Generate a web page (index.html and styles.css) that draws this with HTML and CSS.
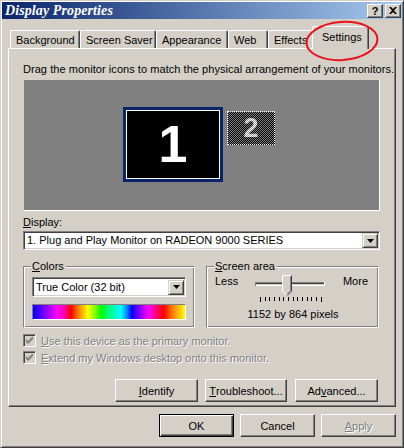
FILE: index.html
```html
<!DOCTYPE html>
<html>
<head>
<meta charset="utf-8">
<link rel="stylesheet" href="styles.css">
</head>
<body>
<div class="window">
  <div class="titlebar">
    <span class="title">Display Properties</span>
    <div class="tb-buttons">
      <span class="tb-btn tb-help">?</span>
      <span class="tb-btn"><svg width="8" height="7" viewBox="0 0 8 7"><path d="M0 0h2l2 2 2-2h2L5 3.5 8 7H6L4 5 2 7H0l3-3.5z" fill="#000"/></svg></span>
    </div>
  </div>

  <div class="tabs">
    <div class="tab t-bg">Background</div>
    <div class="tab t-ss">Screen Saver</div>
    <div class="tab t-ap">Appearance</div>
    <div class="tab t-web">Web</div>
    <div class="tab t-ef">Effects</div>
    <div class="tab active">Settings</div>
  </div>

  <div class="panel">
    <p class="hint">Drag the monitor icons to match the physical arrangement of your monitors.</p>
    <div class="monitors">
      <div class="mon1"><div class="mon1-screen">1</div></div>
      <div class="mon2"><span class="mon2-num">2</span></div>
    </div>

    <div class="lbl"><u>D</u>isplay:</div>
    <div class="combo combo-wide">
      <span class="combo-text">1. Plug and Play Monitor on RADEON 9000 SERIES</span>
      <span class="combo-btn"><svg width="7" height="4" viewBox="0 0 7 4"><path d="M0 0h7L3.5 4z" fill="#000"/></svg></span>
    </div>

    <div class="groups">
      <div class="group">
        <span class="legend"><u>C</u>olors</span>
        <div class="combo combo-colors">
          <span class="combo-text">True Color (32 bit)</span>
          <span class="combo-btn"><svg width="7" height="4" viewBox="0 0 7 4"><path d="M0 0h7L3.5 4z" fill="#000"/></svg></span>
        </div>
        <div class="colorbar"></div>
      </div>
      <div class="group group-screen">
        <span class="legend"><u>S</u>creen area</span>
        <div class="slider-row">
          <span>Less</span>
          <svg class="slider" width="78" height="28" viewBox="0 0 78 28">
            <rect x="3" y="7" width="70" height="1" fill="#808080"/>
            <rect x="3" y="8" width="70" height="1" fill="#404040"/>
            <rect x="3" y="9" width="70" height="1" fill="#d4d0c8"/>
            <rect x="3" y="10" width="70" height="1" fill="#fff"/>
            <rect x="3" y="7" width="1" height="4" fill="#808080"/>
            <rect x="72" y="7" width="1" height="4" fill="#fff"/>
            <path d="M30 0h10v16l-5 5-5-5z" fill="#d4d0c8"/>
            <path d="M30.5 16V0.5h9" fill="none" stroke="#fff"/>
            <path d="M39.5 0.5V16.2L35 20.7" fill="none" stroke="#404040"/>
            <path d="M38.5 1.5V15.8L35 19.3" fill="none" stroke="#808080"/>
            <path d="M30.5 16L35 20.5" fill="none" stroke="#fff"/>
            <g fill="#000">
              <rect x="8" y="22" width="1" height="5"/>
              <rect x="13" y="22" width="1" height="4"/>
              <rect x="17" y="22" width="1" height="4"/>
              <rect x="22" y="22" width="1" height="4"/>
              <rect x="27" y="22" width="1" height="4"/>
              <rect x="31" y="22" width="1" height="4"/>
              <rect x="36" y="22" width="1" height="4"/>
              <rect x="41" y="22" width="1" height="4"/>
              <rect x="45" y="22" width="1" height="4"/>
              <rect x="50" y="22" width="1" height="4"/>
              <rect x="55" y="22" width="1" height="4"/>
              <rect x="59" y="22" width="1" height="4"/>
              <rect x="64" y="22" width="1" height="4"/>
              <rect x="69" y="22" width="1" height="5"/>
            </g>
          </svg>
          <span>More</span>
        </div>
        <div class="res">1152 by 864 pixels</div>
      </div>
    </div>

    <div class="check">
      <span class="cbox"><svg width="7" height="7" viewBox="0 0 7 7"><path d="M0 2v3l2 2 5-5V-1L2 4z" fill="#808080"/></svg></span>
      <span class="dis"><u>U</u>se this device as the primary monitor.</span>
    </div>
    <div class="check">
      <span class="cbox"><svg width="7" height="7" viewBox="0 0 7 7"><path d="M0 2v3l2 2 5-5V-1L2 4z" fill="#808080"/></svg></span>
      <span class="dis"><u>E</u>xtend my Windows desktop onto this monitor.</span>
    </div>

    <div class="panel-buttons">
      <span class="btn b-id"><u>I</u>dentify</span>
      <span class="btn b-tr"><u>T</u>roubleshoot...</span>
      <span class="btn b-adv">Ad<u>v</u>anced...</span>
    </div>
  </div>

  <div class="dlg-buttons">
    <span class="btn b-dlg default">OK</span>
    <span class="btn b-dlg">Cancel</span>
    <span class="btn b-dlg disabled"><span class="dis"><u>A</u>pply</span></span>
  </div>

  <svg class="highlight" width="80" height="46" viewBox="0 0 80 46">
    <ellipse cx="40" cy="22" rx="35.5" ry="19" fill="none" stroke="#e8141c" stroke-width="2" transform="rotate(-4 40 22)"/>
  </svg>
</div>
</body>
</html>
```

FILE: styles.css
```css
* { box-sizing: border-box; }
html, body { margin: 0; padding: 0; background: #d4d0c8; }
body {
  font-family: "Liberation Sans", Arial, sans-serif;
  font-size: 11px;
  color: #000;
}
.window {
  position: relative;
  width: 404px;
  height: 448px;
  background: #d4d0c8;
  border: 1px solid;
  border-color: #d4d0c8 #404040 #404040 #d4d0c8;
  box-shadow: inset 1px 1px 0 #fff, inset -1px -1px 0 #808080;
  padding: 1px;
}
.titlebar {
  height: 17px;
  background: linear-gradient(to right, #0a246a, #a6caf0);
  display: flex;
  align-items: center;
  justify-content: space-between;
  padding: 0 1px 0 3px;
}
.title {
  font-family: "Liberation Serif", "Times New Roman", serif;
  font-weight: bold;
  font-style: italic;
  font-size: 14px;
  color: #fff;
  letter-spacing: 0.1px;
}
.tb-buttons { display: flex; gap: 2px; }
.tb-btn {
  width: 16px;
  height: 14px;
  background: #d4d0c8;
  border: 1px solid;
  border-color: #fff #404040 #404040 #fff;
  box-shadow: inset -1px -1px 0 #808080;
  display: flex;
  align-items: center;
  justify-content: center;
}
.tb-help {
  font-weight: bold;
  font-size: 11px;
  line-height: 1;
  padding-top: 1px;
}

.tabs {
  display: flex;
  align-items: flex-end;
  height: 22px;
  margin: 7px 6px 0 6px;
  padding-left: 2px;
  position: relative;
  z-index: 2;
}
.tab {
  height: 18px;
  border: 1px solid #fff;
  border-bottom: none;
  border-right: 1px solid #404040;
  box-shadow: inset -1px 0 0 #808080;
  border-radius: 2px 2px 0 0;
  padding: 2px 0 0 5px;
  line-height: 14px;
  white-space: nowrap;
  overflow: hidden;
  background: #d4d0c8;
}
.t-bg { width: 70px; }
.t-ss { width: 76px; }
.t-ap { width: 72px; }
.t-web { width: 40px; }
.t-ef { width: 46px; }
.tab.active {
  width: 57px;
  height: 23px;
  margin: 0 -2px -1px -2px;
  padding: 3px 0 0 9px;
  position: relative;
  z-index: 3;
}

.panel {
  margin: 0 6px;
  height: 359px;
  border: 1px solid;
  border-color: #fff #404040 #404040 #fff;
  box-shadow: inset -1px -1px 0 #808080;
  padding: 14px 15px 0 14px;
  position: relative;
  z-index: 1;
}
.hint { margin: 0; line-height: 13px; white-space: nowrap; letter-spacing: 0.05px; }
.monitors {
  position: relative;
  margin-top: 3px;
  height: 132px;
  background: #808080;
  border: 1px solid;
  border-color: #d4d0c8 #fff #fff #d4d0c8;
}
.mon1 {
  position: absolute;
  left: 99px;
  top: 27px;
  width: 100px;
  height: 75px;
  border: 3px solid #0a246a;
}
.mon1-screen {
  width: 100%;
  height: 100%;
  background: #000;
  border: 1px solid #fff;
  color: #fff;
  font-weight: bold;
  font-size: 52px;
  line-height: 66px;
  text-align: center;
}
.mon2 {
  position: absolute;
  left: 203px;
  top: 31px;
  width: 48px;
  height: 34px;
  border: 1px dotted #fff;
  background: repeating-conic-gradient(#000 0 25%, #808080 0 50%) 0 0 / 2px 2px;
  text-align: center;
}
.mon2-num {
  display: inline-block;
  font-weight: bold;
  font-size: 27px;
  line-height: 32px;
  color: transparent;
  background: repeating-conic-gradient(#fff 0 25%, #a0a0a0 0 50%) 0 0 / 2px 2px;
  -webkit-background-clip: text;
  background-clip: text;
}
.lbl { margin-top: 5px; line-height: 13px; }
.combo {
  display: flex;
  align-items: center;
  justify-content: space-between;
  height: 19px;
  background: #fff;
  border: 1px solid;
  border-color: #808080 #fff #fff #808080;
  box-shadow: inset 1px 1px 0 #404040, inset -1px -1px 0 #d4d0c8;
  padding: 2px 2px 2px 3px;
}
.combo-wide { margin-top: 2px; }
.combo-text { white-space: nowrap; line-height: 13px; }
.combo-btn {
  width: 16px;
  height: 15px;
  background: #d4d0c8;
  border: 1px solid;
  border-color: #d4d0c8 #404040 #404040 #d4d0c8;
  box-shadow: inset 1px 1px 0 #fff, inset -1px -1px 0 #808080;
  display: flex;
  align-items: center;
  justify-content: center;
  margin-right: -1px;
}

.groups {
  display: flex;
  gap: 11px;
  margin-top: 16px;
}
.group {
  position: relative;
  width: 172px;
  height: 62px;
  border: 1px solid;
  border-color: #808080 #fff #fff #808080;
  box-shadow: inset 1px 1px 0 #fff, inset -1px -1px 0 #808080;
  padding: 10px 8px 0 8px;
}
.group-screen { width: 173px; padding: 8px 10px 0 8px; }
.legend {
  position: absolute;
  left: 7px;
  top: -7px;
  padding: 0 2px 0 1px;
  line-height: 13px;
  background: #d4d0c8;
}
.combo-colors { width: 154px; height: 20px; }
.colorbar {
  margin-top: 7px;
  width: 154px;
  height: 16px;
  border: 1px solid;
  border-color: #808080 #fff #fff #808080;
  background: linear-gradient(to right,
    #0000ff 0%, #8000ff 8%, #c000ff 12%, #ff00ff 16%, #ff00a0 21%, #ff0000 25%,
    #ff8000 30%, #ffff00 36%, #80ff00 41%, #00ff00 45%, #00ff80 50%, #00ffc0 54%,
    #00ffff 58%, #0080ff 62%, #0000ff 65%, #8000ff 70%, #ff00ff 76%, #ff0080 81%,
    #ff0000 86%, #ff8000 92%, #ffff00 100%);
}
.slider-row {
  display: flex;
  align-items: flex-start;
  justify-content: space-between;
  line-height: 13px;
}
.slider { display: block; margin-left: 1px; }
.res { text-align: center; line-height: 13px; margin-top: 5px; padding-left: 3px; }

.check {
  display: flex;
  align-items: center;
  height: 17px;
  gap: 5px;
}
.groups + .check { margin-top: 4px; }
.cbox {
  width: 13px;
  height: 13px;
  border: 1px solid;
  border-color: #808080 #fff #fff #808080;
  box-shadow: inset 1px 1px 0 #404040, inset -1px -1px 0 #d4d0c8;
  display: flex;
  align-items: center;
  justify-content: center;
  background: #d4d0c8;
}
.dis { color: #808080; text-shadow: 1px 1px 0 #fff; white-space: nowrap; }

.btn {
  display: flex;
  align-items: center;
  justify-content: center;
  height: 23px;
  background: #d4d0c8;
  border: 1px solid;
  border-color: #fff #404040 #404040 #fff;
  box-shadow: inset -1px -1px 0 #808080;
  white-space: nowrap;
}
.panel-buttons {
  display: flex;
  justify-content: flex-end;
  gap: 7px;
  margin-top: 13px;
  margin-right: 2px;
}
.b-id { width: 83px; }
.b-tr { width: 82px; }
.b-adv { width: 83px; margin-left: 1px; }

.dlg-buttons {
  display: flex;
  justify-content: flex-end;
  gap: 6px;
  margin: 7px 6px 0 0;
}
.b-dlg { width: 75px; }
.b-dlg.default {
  border: 1px solid #000;
  box-shadow: inset 1px 1px 0 #fff, inset -1px -1px 0 #404040, inset -2px -2px 0 #808080;
}

.highlight {
  position: absolute;
  left: 301px;
  top: 18px;
  z-index: 5;
}
```
